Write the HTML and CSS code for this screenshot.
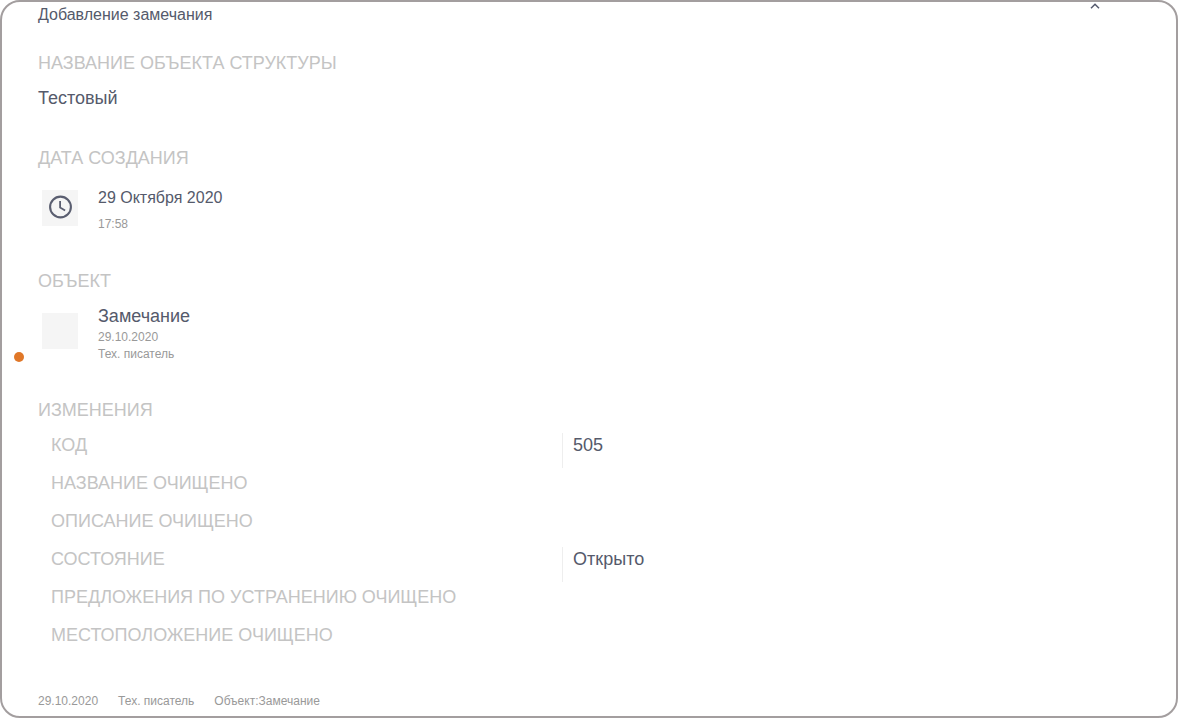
FILE: index.html
```html
<!DOCTYPE html>
<html lang="ru">
<head>
<meta charset="utf-8">
<title>Добавление замечания</title>
<link rel="stylesheet" href="styles.css">
</head>
<body>
<main class="card">
  <header class="card-header">
    <h1 class="title">Добавление замечания</h1>
    <button class="collapse" type="button" aria-label="Свернуть">
      <svg width="10" height="6" viewBox="0 0 10 6" fill="none" stroke="#555a6e" stroke-width="1.5"><path d="M1 5.2 5 1.2 9 5.2"/></svg>
    </button>
  </header>

  <section class="section section-first">
    <h2 class="label">Название объекта структуры</h2>
    <p class="value">Тестовый</p>
  </section>

  <section class="section">
    <h2 class="label">Дата создания</h2>
    <div class="entry">
      <span class="thumb">
        <svg width="24" height="24" viewBox="0 0 24 24" fill="none" stroke="#5a5e70" stroke-width="2.1"><circle cx="12.5" cy="12" r="10.4"/><path d="M12.1 6v6.4l5 3" stroke-width="1.8"/></svg>
      </span>
      <div class="entry-text">
        <p class="date">29 Октября 2020</p>
        <p class="meta time">17:58</p>
      </div>
    </div>
  </section>

  <section class="section">
    <h2 class="label">Объект</h2>
    <div class="entry">
      <span class="thumb"></span>
      <div class="entry-text">
        <p class="name">Замечание</p>
        <p class="meta">29.10.2020</p>
        <p class="meta">Тех. писатель</p>
      </div>
    </div>
    <span class="marker"></span>
  </section>

  <section class="section section-changes">
    <h2 class="label">Изменения</h2>
    <dl class="changes">
      <div class="change"><dt>Код</dt><dd>505</dd></div>
      <div class="change"><dt>Название очищено</dt></div>
      <div class="change"><dt>Описание очищено</dt></div>
      <div class="change"><dt>Состояние</dt><dd>Открыто</dd></div>
      <div class="change"><dt>Предложения по устранению очищено</dt></div>
      <div class="change"><dt>Местоположение очищено</dt></div>
    </dl>
  </section>

  <footer class="card-footer">
    <span>29.10.2020</span>
    <span>Тех. писатель</span>
    <span>Объект:Замечание</span>
  </footer>
</main>
</body>
</html>
```
FILE: styles.css
```css
* { box-sizing: border-box; margin: 0; padding: 0; }

body {
  background: #fff;
  color: #555a6b;
  font-family: "Liberation Sans", Arial, sans-serif;
}

.card {
  min-height: 100vh;
  padding: 0 36px 6px;
  border: 2px solid #a39e9f;
  border-radius: 20px;
}

.card-header {
  display: flex;
  justify-content: space-between;
  align-items: flex-start;
  padding-right: 38px;
}

.title {
  padding-top: 3px;
  font-size: 16px;
  line-height: 20px;
  font-weight: 400;
}

.collapse {
  display: flex;
  padding: 1px 2px;
  border: 0;
  background: none;
}

.section { position: relative; padding-top: 36px; }
.section-first { padding-top: 26px; }
.section-changes { padding-top: 35px; }

.label {
  color: #c4c4c4;
  font-size: 18px;
  line-height: 24px;
  font-weight: 400;
  text-transform: uppercase;
}

.value {
  padding-top: 11px;
  font-size: 18px;
  line-height: 24px;
}

.entry {
  display: flex;
  gap: 20px;
  padding: 10px 0 0 4px;
}

.thumb {
  display: flex;
  align-items: flex-start;
  justify-content: center;
  flex: none;
  width: 36px;
  height: 36px;
  margin-top: 10px;
  padding-top: 5px;
  background: #f5f5f5;
}

.date { padding-top: 6px; font-size: 16px; line-height: 24px; }
.name { font-size: 18px; line-height: 26px; }

.meta {
  color: #999;
  font-size: 12px;
  line-height: 17px;
}

.time { padding-top: 6px; }

.marker {
  position: absolute;
  right: 100%;
  bottom: 1px;
  width: 10px;
  height: 10px;
  margin-right: 14px;
  border-radius: 50%;
  background: #e07728;
}

.changes { padding-top: 9px; }

.change {
  display: grid;
  grid-template-columns: 19fr 21fr;
  min-height: 38px;
  padding: 2px 13px 1px;
  font-size: 18px;
  line-height: 24px;
}

.change dt { color: #c4c4c4; text-transform: uppercase; }

.change dd {
  padding-left: 10px;
  border-left: 1px solid #eee;
}

.card-footer {
  display: flex;
  gap: 20px;
  padding-top: 34px;
  color: #999;
  font-size: 12px;
  line-height: 17px;
}
```
